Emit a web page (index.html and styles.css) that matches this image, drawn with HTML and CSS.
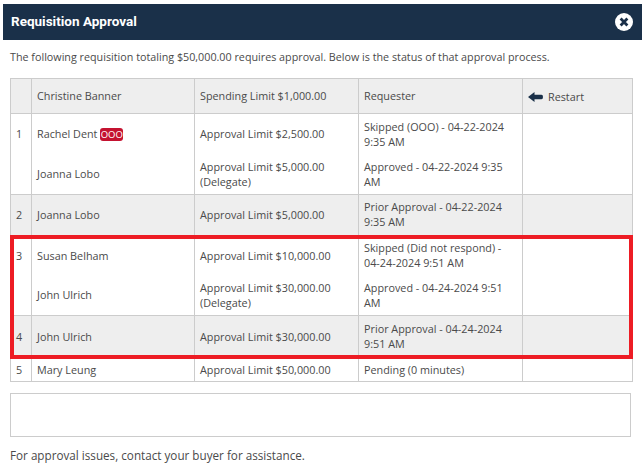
FILE: index.html
```html
<!DOCTYPE html>
<html lang="en">
<head>
<meta charset="utf-8">
<title>Requisition Approval</title>
<link rel="stylesheet" href="styles.css">
</head>
<body>
<div class="dialog">
  <header class="titlebar">
    <h1 class="title">Requisition Approval</h1>
    <svg class="close" width="18" height="18" viewBox="0 0 18 18" aria-label="Close">
      <circle cx="9" cy="9" r="9" fill="#fff"/>
      <path d="M5.6 5.6l6.800 6.800M12.400 5.600l-6.800 6.800" stroke="#1a3049" stroke-width="2.800" fill="none"/>
    </svg>
  </header>
  <div class="content">
    <p class="intro">The following requisition totaling $50,000.00 requires approval. Below is the status of that approval process.</p>
    <div class="table-wrap">
      <table class="status">
        <colgroup>
          <col class="c-num"><col class="c-name"><col class="c-limit"><col class="c-req"><col class="c-act">
        </colgroup>
        <tbody>
          <tr class="shaded h35 line">
            <td></td><td>Christine Banner</td><td>Spending Limit $1,000.00</td><td>Requester</td>
            <td><span class="restart">
              <svg width="15" height="10" viewBox="0 0 15 10"><path d="M0 5L6.500 0V2.800H13.500Q15 2.800 15 5T13.500 7.200H6.500V10z" fill="#1a3049"/></svg>
              Restart</span></td>
          </tr>
          <tr class="h41 raised">
            <td>1</td><td>Rachel Dent <span class="badge">OOO</span></td><td>Approval Limit $2,500.00</td><td>Skipped (OOO) - 04-22-2024 9:35 AM</td><td></td>
          </tr>
          <tr class="h40 line raised">
            <td></td><td>Joanna Lobo</td><td>Approval Limit $5,000.00 (Delegate)</td><td>Approved - 04-22-2024 9:35 AM</td><td></td>
          </tr>
          <tr class="shaded h41 line raised">
            <td>2</td><td>Joanna Lobo</td><td>Approval Limit $5,000.00</td><td>Prior Approval - 04-22-2024 9:35 AM</td><td></td>
          </tr>
          <tr class="h40 raised">
            <td>3</td><td>Susan Belham</td><td>Approval Limit $10,000.00</td><td>Skipped (Did not respond) - 04-24-2024 9:51 AM</td><td></td>
          </tr>
          <tr class="h40 line raised">
            <td></td><td>John Ulrich</td><td>Approval Limit $30,000.00 (Delegate)</td><td>Approved - 04-24-2024 9:51 AM</td><td></td>
          </tr>
          <tr class="shaded h43 line raised">
            <td>4</td><td>John Ulrich</td><td>Approval Limit $30,000.00</td><td>Prior Approval - 04-24-2024 9:51 AM</td><td></td>
          </tr>
          <tr class="h23 line">
            <td>5</td><td>Mary Leung</td><td>Approval Limit $50,000.00</td><td>Pending (0 minutes)</td><td></td>
          </tr>
        </tbody>
      </table>
      <div class="highlight"></div>
    </div>
    <div class="notes"></div>
    <p class="footer">For approval issues, contact your buyer for assistance.</p>
  </div>
</div>
</body>
</html>
```
FILE: styles.css
```css
* { box-sizing: border-box; }
html, body { margin: 0; padding: 0; background: #fff; }
body {
  padding: 4px 2px 0 3px;
  font-family: "Open Sans", sans-serif;
  font-size: 10.8px;
  line-height: 15px;
  color: #4a4a4a;
}
.titlebar {
  height: 36px;
  background: #1a3049;
  display: flex;
  align-items: center;
  justify-content: space-between;
  padding: 0 9px 2px 8px;
}
.title {
  margin: 0;
  font-family: "Roboto", sans-serif;
  font-size: 13.5px;
  font-weight: 700;
  color: #fff;
}
.close { display: block; margin-top: 2px; }
.content { padding: 0 10px 0 7px; }
.intro { margin: 10px 0 0; height: 15px; font-size: 10.75px; }
.table-wrap { position: relative; margin-top: 13px; width: 622px; }
.status {
  width: 622px;
  table-layout: fixed;
  border-collapse: separate;
  border-spacing: 0;
  border-top: 1px solid #ccc;
  border-left: 1px solid #ccc;
}
.c-num { width: 21px; }
.c-name { width: 163px; }
.c-limit { width: 164px; }
.c-req { width: 164px; }
.c-act { width: 110px; }
.status td {
  padding: 0 5px 1px;
  vertical-align: middle;
  border-right: 1px solid #ccc;
}
.status .raised td { padding-bottom: 2px; }
.status .line td { border-bottom: 1px solid #ccc; }
.shaded td { background: #eee; }
.h35 { height: 35px; }
.h41 { height: 41px; }
.h40 { height: 40px; }
.h43 { height: 43px; }
.h23 { height: 23px; }
.badge {
  display: inline-block;
  width: 23px;
  height: 13px;
  background: #c41230;
  border-radius: 3px;
  color: #fff;
  font-size: 9.5px;
  line-height: 13px;
  text-align: center;
  vertical-align: 0;
}
.restart { display: flex; align-items: center; gap: 5px; padding-top: 2px; }
.restart svg { display: block; }
.highlight {
  position: absolute;
  left: 0;
  top: 157px;
  width: 623px;
  height: 124px;
  border: 4px solid #ed1c24;
  pointer-events: none;
}
.notes {
  width: 621px;
  height: 44px;
  margin-top: 11px;
  border: 1px solid #ccc;
}
.footer { margin: 11px 0 0; font-size: 11.7px; }
```
